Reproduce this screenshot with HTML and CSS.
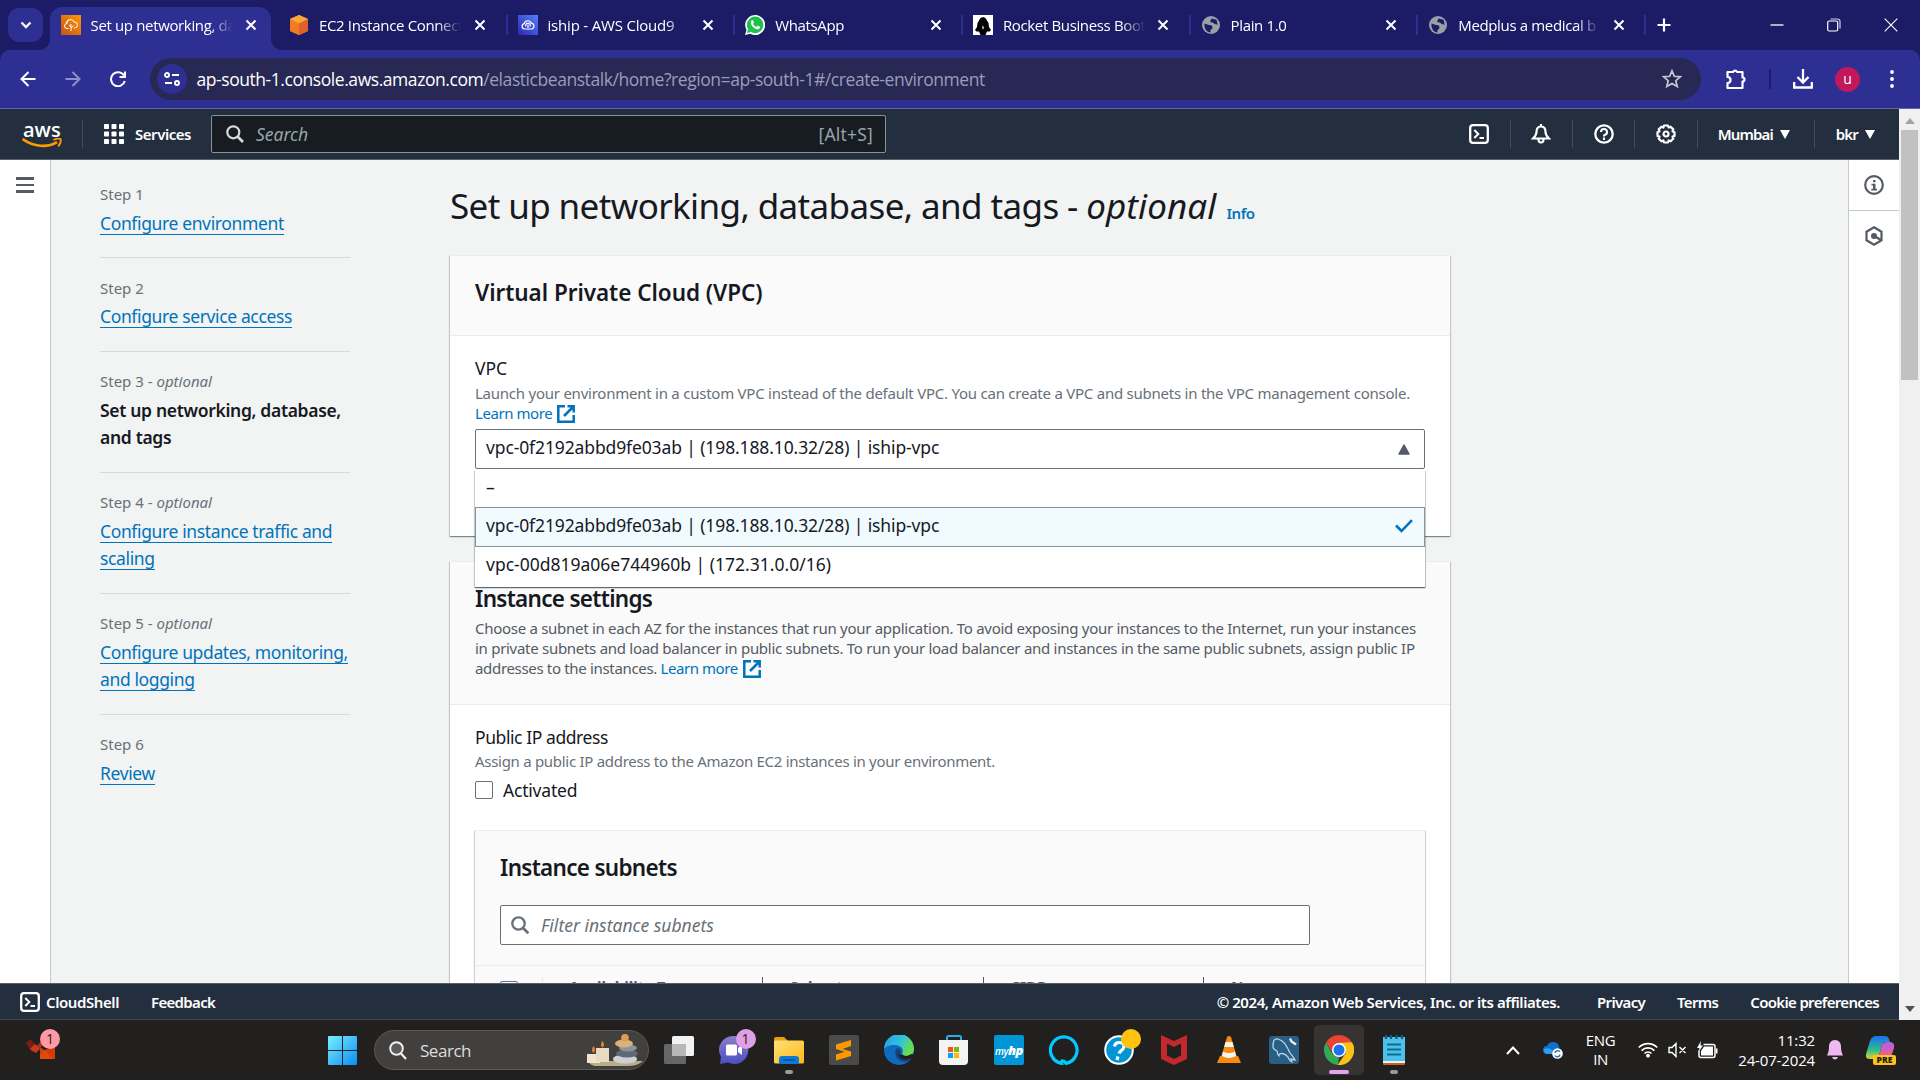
FILE: index.html
```html
<!DOCTYPE html>
<html lang="en">
<head>
<meta charset="utf-8">
<title>Set up networking, database, and tags</title>
<link rel="stylesheet" href="styles.css">
</head>
<body>
<svg class="defs" aria-hidden="true">
  <defs>
    <symbol id="close" viewBox="0 0 12 12"><path d="M1.500 1.500l9 9M10.500 1.500l-9 9" stroke="#fff" stroke-width="2" fill="none"/></symbol>
    <symbol id="globe" viewBox="0 0 20 20"><circle cx="10" cy="10" r="9" fill="#9aa0a6"/><path d="M3.500 8.500l4.500 1.500 3 .5.5 3-2 1.500v2.500c-3.500-.5-6.500-3.500-6-9zM10.500 3.500l5 1.200 1.200 5-3-.7-2-1.500-2.700-.5z" fill="#1c1b66"/></symbol>
    <symbol id="ext" viewBox="0 0 18 18"><path d="M8 1.300H1.300v15.400h15.400V10M10.500 1.300h6.200v6.200M16.500 1.500L7 11" stroke="#0073bb" stroke-width="2.500" fill="none"/></symbol>
    <symbol id="shell" viewBox="0 0 20 20"><rect x="1.200" y="1.200" width="17.600" height="17.600" rx="2.800" stroke="#fff" stroke-width="2.300" fill="none"/><path d="M5.300 6l4 4-4 4M10.500 14h4.500" stroke="#fff" stroke-width="2" fill="none"/></symbol>
    <symbol id="caret" viewBox="0 0 10 9"><path d="M0 0h10L5 9z" fill="#fff"/></symbol>
  </defs>
</svg>

<header class="tabstrip">
  <div class="tabsearch"><svg width="12" height="8" viewBox="0 0 12 8"><path d="M1.500 1.500L6 6l4.500-4.500" stroke="#fff" stroke-width="2.300" fill="none"/></svg></div>
  <div class="tab wide active">
    <svg class="fav" viewBox="0 0 20 20"><defs><linearGradient id="gO" x1="0" y1="1" x2="1" y2="0"><stop offset="0" stop-color="#c8511b"/><stop offset="1" stop-color="#f90"/></linearGradient></defs><rect width="20" height="20" fill="url(#gO)"/><path d="M7.500 13.500H6a2.500 2.500 0 010-5 3.600 3.600 0 017-1.500 3 3 0 01.8 6H12.500M10 16V9M10 12l-2-2M10 13l2.500-2.500M7.500 4.500L5 8" stroke="#fff" stroke-width="1" fill="none"/></svg>
    <span class="tabtitle">Set up networking, da</span><svg class="x"><use href="#close"/></svg>
  </div>
  <div class="tab wide">
    <svg class="fav" viewBox="0 0 20 20"><path d="M10 0l9 4v12l-9 4-9-4V4z" fill="#f58536"/><path d="M1 4l9 4.500V20l-9-4z" fill="#f27a22"/><path d="M10 0l9 4-9 4.500L1 4z" fill="#fba63c"/><path d="M10 8.500L19 4v12l-9 4z" fill="#e0602a"/></svg>
    <span class="tabtitle">EC2 Instance Connect</span><svg class="x"><use href="#close"/></svg>
  </div>
  <div class="tab">
    <svg class="fav" viewBox="0 0 20 20"><defs><linearGradient id="gB" x1="0" y1="1" x2="1" y2="0"><stop offset="0" stop-color="#2e27ad"/><stop offset="1" stop-color="#527fff"/></linearGradient></defs><rect width="20" height="20" fill="url(#gB)"/><path d="M6.500 14a2.700 2.700 0 01-.3-5.300 3.700 3.700 0 017.100-.5A3 3 0 0114 14zM8 11.500a2.300 2.300 0 114 0M10 9.500V13" stroke="#fff" stroke-width="1.200" fill="none"/></svg>
    <span class="tabtitle loose">iship - AWS Cloud9</span><svg class="x"><use href="#close"/></svg>
  </div>
  <div class="tab">
    <svg class="fav" viewBox="0 0 20 20"><path d="M0 20l1.500-5A10 10 0 1110 20a10 10 0 01-4.800-1.300z" fill="#fff"/><circle cx="10.100" cy="9.900" r="8.300" fill="#1fc04c"/><path d="M2 18l1-4 3 3z" fill="#1fc04c"/><path d="M6.500 5.500c1-1 1.500-.5 2.300 1.700.3.800-.6 1-.6 1.700.6 1.300 1.600 2.300 3 2.900.6 0 1-1.300 1.700-1 2 1 2.600 1 2 2-1 2.300-4 1.700-6.300-.3C6 10.200 5 7.500 6.500 5.500z" fill="#fff"/></svg>
    <span class="tabtitle">WhatsApp</span><svg class="x"><use href="#close"/></svg>
  </div>
  <div class="tab">
    <svg class="fav" viewBox="0 0 20 20"><rect width="20" height="20" fill="#fff"/><path d="M10 2l2.500 1 3 5 .5 4 2 3-1.500 1.500H14L12.500 20h-5L6 16.500H3.500L2 15l2-3 .5-4 3-5z" fill="#000"/><path d="M10 10l.8 3-.8 1.500-.8-1.500z" fill="#fff"/></svg>
    <span class="tabtitle">Rocket Business Boot</span><svg class="x"><use href="#close"/></svg>
  </div>
  <div class="tab"><svg class="fav"><use href="#globe"/></svg><span class="tabtitle">Plain 1.0</span><svg class="x"><use href="#close"/></svg></div>
  <div class="tab"><svg class="fav"><use href="#globe"/></svg><span class="tabtitle">Medplus a medical b</span><svg class="x"><use href="#close"/></svg></div>
  <svg class="plus" width="14" height="14" viewBox="0 0 14 14"><path d="M7 .5v13M.5 7h13" stroke="#fff" stroke-width="2.200"/></svg>
  <div class="winbtns">
    <svg width="14" height="14" viewBox="0 0 14 14"><path d="M.5 7h13" stroke="#fff" stroke-width="1.300"/></svg>
    <svg width="14" height="14" viewBox="0 0 14 14"><rect x=".7" y="3" width="10" height="10" rx="1.500" fill="#1c1b66" stroke="#fff" stroke-width="1.200"/><path d="M3.500 1h7a2.500 2.500 0 012.500 2.500v7" stroke="#d0d0e8" stroke-width="1.200" fill="none"/></svg>
    <svg width="14" height="14" viewBox="0 0 14 14"><path d="M.7.7l12.600 12.600M13.300.7L.7 13.300" stroke="#fff" stroke-width="1.100"/></svg>
  </div>
</header>

<div class="toolbar">
  <div class="navbtns">
    <svg width="16" height="16" viewBox="0 0 16 16"><path d="M15.500 8H2M8.500 1L1.500 8l7 7" stroke="#fff" stroke-width="2" fill="none"/></svg>
    <svg width="16" height="16" viewBox="0 0 16 16"><path d="M.5 8H14M7.500 1l7 7-7 7" stroke="#8f8fc9" stroke-width="2" fill="none"/></svg>
    <svg width="16" height="16" viewBox="0 0 16 16"><path d="M14 4.500A7 7 0 1014.800 10M15 .5V6H9.500" stroke="#fff" stroke-width="2" fill="none"/></svg>
  </div>
  <div class="omnibox">
    <span class="siteinfo"><svg width="16" height="14" viewBox="0 0 16 14"><g stroke="#fff" stroke-width="1.900" fill="none"><circle cx="3" cy="3" r="2"/><path d="M8 3h7M1 11h7"/><circle cx="13" cy="11" r="2"/></g></svg></span>
    <span class="url"><b>ap-south-1.console.aws.amazon.com</b>/elasticbeanstalk/home?region=ap-south-1#/create-environment</span>
    <svg class="star" width="20" height="20" viewBox="0 0 20 20"><path d="M10 1.800l2.300 5.500 6 .5-4.500 3.900 1.400 5.800-5.200-3.100-5.200 3.100 1.400-5.800L1.700 7.800l6-.5z" stroke="#c7c7d2" stroke-width="1.700" fill="none"/></svg>
  </div>
  <svg class="puzzle" width="21" height="22" viewBox="0 0 21 22"><path d="M1.500 4h5.700a2 2 0 013.800 0H16.500v5.500a2 2 0 010 4V20h-15v-5a2.700 2.700 0 000-6z" stroke="#fff" stroke-width="2.200" fill="none" stroke-linejoin="round"/></svg>
  <span class="tbsep"></span>
  <svg class="dl" width="20" height="20" viewBox="0 0 20 20"><path d="M10 0v13M4.500 8l5.500 5.500L15.500 8M1.200 13v5.500h17.600V13" stroke="#fff" stroke-width="2.300" fill="none"/></svg>
  <span class="avatar">u</span>
  <svg class="kebab" width="4" height="18" viewBox="0 0 4 18"><g fill="#fff"><circle cx="2" cy="2" r="1.900"/><circle cx="2" cy="9" r="1.900"/><circle cx="2" cy="16" r="1.900"/></g></svg>
</div>

<div class="viewport">
  <div class="page">
    <nav class="awsbar">
      <div class="awslogo"><span>aws</span><svg width="40" height="11" viewBox="0 0 40 11"><path d="M.5 1c11 8 25 9 34.500 3.200" stroke="#f90" stroke-width="2.700" fill="none"/><path d="M31.500 2c3-1.500 5.500-1.700 7-1 .6 2-.3 5-2.300 7.300" stroke="#f90" stroke-width="1.900" fill="none"/></svg></div>
      <i class="asep"></i>
      <svg class="gridicon" width="20" height="20" viewBox="0 0 20 20"><g fill="#fff"><rect width="5" height="5" rx=".8"/><rect x="7.500" width="5" height="5" rx=".8"/><rect x="15" width="5" height="5" rx=".8"/><rect y="7.500" width="5" height="5" rx=".8"/><rect x="7.500" y="7.500" width="5" height="5" rx=".8"/><rect x="15" y="7.500" width="5" height="5" rx=".8"/><rect y="15" width="5" height="5" rx=".8"/><rect x="7.500" y="15" width="5" height="5" rx=".8"/><rect x="15" y="15" width="5" height="5" rx=".8"/></g></svg>
      <span class="nav services">Services</span>
      <div class="awssearch"><svg width="18" height="18" viewBox="0 0 18 18"><circle cx="7.300" cy="7.300" r="6" stroke="#d5dbdb" stroke-width="2.200" fill="none"/><path d="M11.500 11.500l5.500 5.500" stroke="#d5dbdb" stroke-width="2.600"/></svg><em>Search</em><span>[Alt+S]</span></div>
      <div class="awsicons">
        <svg width="20" height="20"><use href="#shell"/></svg><i class="asep"></i>
        <svg width="20" height="20" viewBox="0 0 20 20"><path d="M10 2.500c-3.500 0-4.500 2.500-4.500 5.500 0 3-1.500 4.500-3.500 6.500h16c-2-2-3.500-3.500-3.500-6.500 0-3-1-5.500-4.500-5.500zM10 0v3M7.500 15.500a2.500 3 0 005 0" stroke="#fff" stroke-width="2.200" fill="none"/></svg><i class="asep"></i>
        <svg width="20" height="20" viewBox="0 0 20 20"><circle cx="10" cy="10" r="8.700" stroke="#fff" stroke-width="2.300" fill="none"/><path d="M7 8a3 3 0 113.500 3c-.5.200-.5.600-.5 1.500M10 13.500V16" stroke="#fff" stroke-width="2.100" fill="none"/></svg><i class="asep"></i>
        <svg width="20" height="20" viewBox="0 0 20 20"><path d="M8 1.500h4l.6 2 2-.8 2.700 2.700-.8 2 2 .6v4l-2 .6.8 2-2.700 2.700-2-.8-.6 2H8l-.6-2-2 .8-2.700-2.700.8-2-2-.6V8l2-.6-.8-2 2.700-2.700 2 .8z" stroke="#fff" stroke-width="2.200" fill="none" stroke-linejoin="round"/><circle cx="10" cy="10" r="2.500" stroke="#fff" stroke-width="2.200" fill="none"/></svg><i class="asep"></i>
      </div>
      <span class="nav region">Mumbai</span><svg class="car" width="10" height="9"><use href="#caret"/></svg>
      <i class="asep last"></i>
      <span class="nav user">bkr</span><svg class="car" width="10" height="9"><use href="#caret"/></svg>
    </nav>

    <div class="body">
      <aside class="rail"><i></i><i></i><i></i></aside>
      <div class="content">
        <ol class="steps">
          <li><small>Step 1</small><a>Configure environment</a></li>
          <li><small>Step 2</small><a>Configure service access</a></li>
          <li><small>Step 3 - <em>optional</em></small><strong>Set up networking, database,</strong><br><strong>and tags</strong></li>
          <li><small>Step 4 - <em>optional</em></small><a>Configure instance traffic and</a><br><a>scaling</a></li>
          <li><small>Step 5 - <em>optional</em></small><a>Configure updates, monitoring,</a><br><a>and logging</a></li>
          <li><small>Step 6</small><a>Review</a></li>
        </ol>
        <main class="main">
          <div class="headline"><h1>Set up networking, database, and tags - <em>optional</em></h1><b>Info</b></div>

          <section class="card vpc">
            <div class="cardhead"><h2>Virtual Private Cloud (VPC)</h2></div>
            <div class="cardbody">
              <div class="label">VPC</div>
              <div class="hint">Launch your environment in a custom VPC instead of the default VPC. You can create a VPC and subnets in the VPC management console.<br><span class="link">Learn more</span><svg class="ext" width="18" height="18"><use href="#ext"/></svg></div>
              <div class="selectwrap">
                <div class="select"><span class="val">vpc-0f2192abbd9fe03ab | (198.188.10.32/28) | iship-vpc</span><svg width="12" height="11" viewBox="0 0 12 11"><path d="M6 1l5 9H1z" fill="#545b64" stroke="#545b64" stroke-width="1.500" stroke-linejoin="round"/></svg></div>
                <div class="menu">
                  <div class="opt first"><span>–</span></div>
                  <div class="opt sel"><span class="val">vpc-0f2192abbd9fe03ab | (198.188.10.32/28) | iship-vpc</span><svg width="18" height="14" viewBox="0 0 18 14"><path d="M1 6.500l5.500 5.500L17 1.200" stroke="#0073bb" stroke-width="2.500" fill="none"/></svg></div>
                  <div class="opt"><span>vpc-00d819a06e744960b | (172.31.0.0/16)</span></div>
                </div>
              </div>
            </div>
          </section>

          <section class="card inst">
            <div class="cardhead">
              <h2>Instance settings</h2>
              <p class="hint dark">Choose a subnet in each AZ for the instances that run your application. To avoid exposing your instances to the Internet, run your instances<br>in private subnets and load balancer in public subnets. To run your load balancer and instances in the same public subnets, assign public IP<br><span class="third">addresses to the instances. <span class="link">Learn more</span></span><svg class="ext" width="18" height="18"><use href="#ext"/></svg></p>
            </div>
            <div class="cardbody">
              <div class="label">Public IP address</div>
              <div class="hint tight">Assign a public IP address to the Amazon EC2 instances in your environment.</div>
              <div class="check"><i class="box"></i><span>Activated</span></div>
              <div class="subcard">
                <h2>Instance subnets</h2>
                <div class="filter"><svg width="18" height="18" viewBox="0 0 18 18"><circle cx="7.500" cy="7.500" r="6.200" stroke="#687078" stroke-width="2.300" fill="none"/><path d="M12 12l5.300 5.300" stroke="#687078" stroke-width="2.700"/></svg><em>Filter instance subnets</em></div>
                <div class="thead"><span class="c0"><i class="box"></i></span><span class="c1">Availability Zone</span><span class="c2">Subnet</span><span class="c2">CIDR</span><span class="c2">Name</span></div>
              </div>
            </div>
          </section>
        </main>
      </div>
      <aside class="tools">
        <div><svg width="20" height="20" viewBox="0 0 20 20"><circle cx="10" cy="10" r="8.800" stroke="#545b64" stroke-width="2.200" fill="none"/><path d="M9 5h2.500v2.200H9zM7.500 8.700h4v5H13v1.800H7.300v-1.800H9v-3.200H7.500z" fill="#545b64"/></svg></div>
        <div><svg width="20" height="20" viewBox="0 0 20 20"><path d="M10 1.300l7.500 4.400v8.600L10 18.700l-7.500-4.400V5.700z" stroke="#545b64" stroke-width="2.200" fill="none"/><circle cx="10" cy="10" r="3" fill="#545b64"/><path d="M11 10.500l6 3.500" stroke="#545b64" stroke-width="2.400"/></svg></div>
      </aside>
    </div>

    <footer class="awsfoot">
      <svg width="20" height="20"><use href="#shell"/></svg><span class="f1">CloudShell</span><span class="f2">Feedback</span>
      <span class="f3">© 2024, Amazon Web Services, Inc. or its affiliates.</span><span class="f4">Privacy</span><span class="f5">Terms</span><span class="f6">Cookie preferences</span>
    </footer>
  </div>
  <div class="scroll"><svg width="10" height="6" viewBox="0 0 10 6"><path d="M0 6l5-6 5 6z" fill="#a3a3a3"/></svg><i></i><svg width="10" height="6" viewBox="0 0 10 6"><path d="M0 0l5 6 5-6z" fill="#505050"/></svg></div>
</div>

<footer class="taskbar">
  <div class="widget"><svg width="32" height="30" viewBox="0 0 32 30"><path d="M0 5l4-4 6 6-5 6z" fill="#7b1d16"/><path d="M5 13L17 2l2 3-9 9z" fill="#a8321a"/><path d="M4 11l5-5 5 5-4 4z" fill="#c9391a"/><path d="M14 17V9l4 3 11-3v12H14z" fill="#d83b01"/><path d="M14 17l5-5 8 9H14z" fill="#e04a0b"/></svg><b>1</b></div>
  <svg class="start" width="29" height="29" viewBox="0 0 29 29"><defs><linearGradient id="gW" x1="0" y1="0" x2="1" y2="1"><stop offset="0" stop-color="#7af0ff"/><stop offset="1" stop-color="#0a8bf5"/></linearGradient></defs><path d="M0 1q0-1 1-1h13v14H0zM15 0h13q1 0 1 1v13H15zM0 15h14v14H1q-1 0-1-1zM15 15h14v13q0 1-1 1H15z" fill="url(#gW)"/></svg>
  <div class="tsearch"><svg width="18" height="19" viewBox="0 0 18 19"><circle cx="7.500" cy="7.500" r="6.300" stroke="#f2f2f2" stroke-width="1.900" fill="#5a5a5c"/><path d="M12 12.500l5 5.500" stroke="#f2f2f2" stroke-width="2.200"/></svg><span>Search</span>
    <svg class="candles" width="60" height="32" viewBox="0 0 60 32"><path d="M4 27h54q-5 5-16 5H10q-6-1-6-5z" fill="#b8ae88"/><rect x="2" y="20" width="13" height="9" fill="#f1e6cd"/><rect x="11" y="14" width="13" height="14" fill="#e8dcc0"/><path d="M8.500 12q3 4 0 7-3-3 0-7zM17.500 7q3 4 0 6.500-3-2.500 0-6.500z" fill="#f58220"/><ellipse cx="40" cy="25" rx="12" ry="4.500" fill="#cfd0d6"/><ellipse cx="42" cy="19.500" rx="11" ry="4" fill="#5d6a73"/><ellipse cx="43" cy="14" rx="9" ry="3.500" fill="#8b9499"/><ellipse cx="39" cy="9.500" rx="9" ry="4" fill="#d9b27a"/><circle cx="40" cy="3.800" r="3.800" fill="#dd9d52"/></svg>
  </div>
  <div class="apps">
    <div class="app"><svg viewBox="0 0 30 30"><rect y="9" width="22" height="20" rx="1.500" fill="#666"/><rect x="8" y="1" width="22" height="20" rx="1.500" fill="#f2f2f2"/><path d="M8 9h14v12H8z" fill="#b8b8b8"/></svg></div>
    <div class="app"><svg viewBox="0 0 30 30"><defs><linearGradient id="gC" x1="0" y1="0" x2="0" y2="1"><stop offset="0" stop-color="#8b7fc8"/><stop offset="1" stop-color="#4b4fc4"/></linearGradient></defs><path d="M15 1a14 14 0 11-6 26.500L1 29l1-7A14 14 0 0115 1z" fill="url(#gC)"/><rect x="7" y="9.500" width="11" height="11" rx="1.500" fill="#fff"/><path d="M19 13l4-3v10l-4-3z" fill="#fff"/></svg><b class="badge pink">1</b></div>
    <div class="app"><svg viewBox="0 0 30 30"><defs><linearGradient id="gF" x1="0" y1="0" x2="1" y2="1"><stop offset="0" stop-color="#ffe07a"/><stop offset="1" stop-color="#fcb916"/></linearGradient></defs><path d="M0 4q0-2 2-2h8l4 4v6H0z" fill="#e3a008"/><rect y="5.500" width="30" height="23" rx="1.500" fill="url(#gF)"/><path d="M5 29v-5q0-3 3-3h14q3 0 3 3v5z" fill="#0f78d4"/><path d="M9 25h12" stroke="#0a4f96" stroke-width="1.500"/></svg><i class="dot"></i></div>
    <div class="app"><svg viewBox="0 0 30 30"><rect width="30" height="30" rx="2" fill="#4a4a4a"/><path d="M7 9.500L22 5v6l-8.500 3L22 16.500V21L7 25.500v-6l8.500-2.700L7 14z" fill="#ff9800"/></svg></div>
    <div class="app"><svg viewBox="0 0 30 30"><defs><linearGradient id="gE" x1="0" y1="0" x2="1" y2=".4"><stop offset="0" stop-color="#1b9de2"/><stop offset=".6" stop-color="#35c1e0"/><stop offset="1" stop-color="#66e04a"/></linearGradient></defs><circle cx="15" cy="15" r="15" fill="#0f6cbd"/><path d="M0 14A15 15 0 0130 14c0 5-4 7-8 7-3 0-4-1.500-3.500-3 1-2 .5-6-4.500-7.500C8 9 2 11 0 14z" fill="url(#gE)"/><path d="M12 14c-3 7 3 13 10 13 3-.5 5-3 6-4.500-5 2-13 .5-11-5.500 0-3-3-5-5-3z" fill="#14407e"/><path d="M14 20c2 4 8 5.500 13.500 3l2.500 2v-5l-3-1c-4 3-7 2-9 .5z" fill="#221f1e"/></svg></div>
    <div class="app"><svg viewBox="0 0 30 30"><path d="M8 7V2.500Q8 1 9.500 1h11Q22 1 22 2.500V7" stroke="#28aee8" stroke-width="2" fill="none"/><path d="M0 5h29v21q0 4-4 4H4q-4 0-4-4z" fill="#f3f3f3"/><path fill="#f25022" d="M9 12h5v5H9z"/><path fill="#7fba00" d="M15 12h5v5h-5z"/><path fill="#00a4ef" d="M9 18h5v5H9z"/><path fill="#ffb900" d="M15 18h5v5h-5z"/></svg></div>
    <div class="app"><span class="myhp">my<b>hp</b></span></div>
    <div class="app"><svg viewBox="0 0 30 30"><path d="M12.500 28.300A13.300 13.300 0 1117 28.300C15 25 11.500 25 12.500 28.300z" stroke="#00caff" stroke-width="3.200" fill="none" /></svg></div>
    <div class="app"><svg viewBox="0 0 30 30"><circle cx="15" cy="15" r="13.800" fill="#0096d6" stroke="#fff" stroke-width="2"/><path d="M10.500 11.500Q11 7.500 15.500 7.500t4.500 4c0 3.500-4 3.500-5 7M14 21.500l-1 3.500" stroke="#fff" stroke-width="3.200" fill="none"/></svg><b class="badge yellow"></b></div>
    <div class="app"><svg viewBox="0 0 30 30"><path d="M2 0l13 6 13-6v24l-13 6-13-6zm6 8.500v12L15 24l7-3.500v-12L15 12z" fill="#c2292e" fill-rule="evenodd"/></svg></div>
    <div class="app"><svg viewBox="0 0 30 30"><path d="M13 2q2-2 4 0l7 24H6z" fill="#f98b0e"/><path d="M11.500 7h7l1.300 5h-9.600zM9 16.500q6 3 12 0l1.300 5.500q-7.300 4-14.600 0z" fill="#f3f3f3"/><path d="M6 21h2q7 4 14 0h2l3 7H3z" fill="#f98b0e"/></svg></div>
    <div class="app"><svg viewBox="0 0 30 30"><rect y="1" width="30" height="28" rx="3" fill="#2a5f85"/><path d="M4 12C4 6 5 3 9 4c7 2 9 8 12 14 2 3 4 4 5 7l-4-1 1 3c-3-1-3-3-4-5C16 18 10 17 10 21c-2-1-1-3-2-5-2-1-4-2-4-4z" stroke="#b9d3e4" stroke-width="1.300" fill="none"/><path d="M21 3.500l1.500 3 4.500 3" stroke="#eee" stroke-width="2.400" fill="none"/></svg></div>
    <div class="app on"><svg viewBox="0 0 30 30"><path d="M15 0a15 15 0 0113 7.500H15L9 18.500 2 7.500A15 15 0 0115 0z" fill="#ea4335"/><path d="M2 7.500L8.500 19 15 22.500 13.800 30A15 15 0 012 7.500z" fill="#34a853"/><path d="M28 7.500A15 15 0 0113.500 30L21.500 18.500V7.500z" fill="#fbc116"/><path d="M15 7.500h13q2 4 2 7.500l-9 1z" fill="#fbc116"/><circle cx="15" cy="15" r="7" fill="#fff"/><circle cx="15" cy="15" r="5.500" fill="#1a73e8"/></svg><i class="dot long"></i></div>
    <div class="app"><svg viewBox="0 0 30 30"><path d="M4 2h22v26q0 2-2 2H6q-2 0-2-2z" fill="#4cc2ea"/><path d="M4 27h22v1q0 2-2 2H6q-2 0-2-2z" fill="#c9621d"/><path d="M4 26h22v2H4z" fill="#eee"/><path d="M7 0v4M12 0v4M17.500 0v4M23 0v4" stroke="#0b5c80" stroke-width="2.200"/><path d="M8 9.500h14M8 14.500h14M8 19.500h14" stroke="#0d6a92" stroke-width="2"/></svg><i class="dot"></i></div>
  </div>
  <div class="tray">
    <svg class="up" width="14" height="9" viewBox="0 0 14 9"><path d="M1 8l6-6.500L13 8" stroke="#fff" stroke-width="2" fill="none"/></svg>
    <svg class="od" width="20" height="18" viewBox="0 0 20 18"><path d="M4 13a4 4 0 010-8 6.500 6.500 0 0112 0q1 3 0 8z" fill="#0f6fce"/><path d="M1 8q6-3 12 5H4Q0 12 1 8z" fill="#2aa0f2"/><circle cx="14.500" cy="12.500" r="5.300" fill="#fff"/><path d="M12 12a2.700 2.700 0 015-1M17 13.500a2.700 2.700 0 01-5 1" stroke="#0f6fce" stroke-width="1.400" fill="none"/></svg>
    <span class="lang">ENG<br>IN</span>
    <svg class="wifi" width="20" height="16" viewBox="0 0 20 16"><g stroke="#fff" stroke-width="1.700" fill="none"><path d="M.8 5.500a13 13 0 0118.400 0M3.600 8.600a9 9 0 0112.800 0M6.500 11.500a5 5 0 017 0"/></g><circle cx="10" cy="13.700" r="1.900" fill="#fff"/></svg>
    <svg class="mute" width="19" height="16" viewBox="0 0 19 16"><path d="M1 5.500h3L8 1.500v13L4 10.500H1zM11.500 5l6 6M17.500 5l-6 6" stroke="#fff" stroke-width="1.400" fill="none"/></svg>
    <svg class="bat" width="21" height="18" viewBox="0 0 21 18"><path d="M6.500 3.500H16q2 0 2 2v9q0 2-2 2H4q-2 0-2-2V9.500" stroke="#fff" stroke-width="1.500" fill="none"/><path d="M4 14.500V10L7 5.500h9v9zM19 7.500h1.500v5H19z" fill="#fff"/><path d="M4 0L0 7h2.500L1.500 11 6 4.500H3.500z" fill="#fff"/></svg>
    <span class="clock">11:32<br>24-07-2024</span>
    <svg class="bell" width="16" height="20" viewBox="0 0 16 20"><path d="M8 0c4 0 6 3 6 6.500 0 4 .5 5.500 2 9H0c1.500-3.500 2-5 2-9C2 3 4 0 8 0zM5 17h6q-1 2.500-3 2.500T5 17z" fill="#efb8f0"/></svg>
    <svg class="copilot" width="30" height="30" viewBox="0 0 30 30"><defs><linearGradient id="gP" x1="0" y1="0" x2="0" y2="1"><stop offset="0" stop-color="#1a6ff0"/><stop offset=".6" stop-color="#2dbd8c"/><stop offset="1" stop-color="#e3d02f"/></linearGradient><linearGradient id="gQ" x1="0" y1="0" x2="0" y2="1"><stop offset="0" stop-color="#b45cf0"/><stop offset="1" stop-color="#f4627d"/></linearGradient></defs><path d="M10 1h9q3 0 4 3l1 3h-5q-2 0-3 3l-3 10q-1 4-5 4H4q-5 0-4-5L4 6q2-5 6-5z" fill="url(#gP)"/><path d="M21 7h3q5 0 4 6l-3 9H11q2-1 3-5l2-7q1-3 5-3z" fill="url(#gQ)"/><rect x="7" y="20" width="23" height="10" rx="2" fill="#fcc417"/><text x="18.500" y="28.300" class="pre">PRE</text></svg>
  </div>
</footer>
</body>
</html>
```
FILE: styles.css
```css
* { box-sizing: border-box; }
body { margin: 0; width: 1920px; height: 1080px; overflow: hidden; display: flex; flex-direction: column; font-family: "Noto Sans", "Open Sans", sans-serif; color: #16191f; background: #1c1b66; }
svg { display: block; flex: none; }
.defs { position: absolute; width: 0; height: 0; }
i { flex: none; }

/* browser tabs */
.tabstrip { height: 50px; flex: none; display: flex; align-items: stretch; background: #1c1b66; color: #fff; padding-left: 8px; font: 15px "Open Sans", sans-serif; }
.tabsearch { width: 35px; height: 34px; margin: 8px 6.5px 0 0; border-radius: 11px; background: #2e2f92; display: flex; align-items: center; justify-content: center; }
.tab { width: 227.7px; flex: none; display: flex; align-items: center; position: relative; padding-left: 11px; }
.tab.wide { width: 228.5px; }
.tab::after { content: ""; position: absolute; right: -1px; top: 15px; width: 2px; height: 20px; background: #2e2f92; }
.fav { width: 20px; height: 20px; margin-right: 10px; position: relative; }
.tabtitle { width: 142px; height: 24px; line-height: 24px; overflow: hidden; white-space: nowrap; position: relative; margin-right: 12.5px; letter-spacing: -0.35px; -webkit-mask-image: linear-gradient(90deg, #000 118px, transparent 142px); mask-image: linear-gradient(90deg, #000 118px, transparent 142px); }
.tabtitle.loose { letter-spacing: -.19px; }
.x { width: 12px; height: 12px; position: relative; }
.tab.active::before { content: ""; position: absolute; left: .5px; top: 7px; width: 221px; height: 43px; border-radius: 12px 12px 0 0; background: #2e2f92; }
.tab.active::after { left: -11.5px; right: auto; top: 38px; width: 245px; height: 12px; background: radial-gradient(circle at 0 0, transparent 12px, #2e2f92 12.5px) left / 12px 12px no-repeat, radial-gradient(circle at 100% 0, transparent 12px, #2e2f92 12.5px) right / 12px 12px no-repeat; }
.plus { align-self: center; margin-left: 12px; }
.winbtns { display: flex; align-items: center; gap: 43px; margin: 0 22px 0 auto; }

/* address bar */
.toolbar { height: 59px; flex: none; display: flex; align-items: center; background: #2e2f92; border-bottom: 1px solid #6264b0; border-radius: 10px 10px 0 0; padding: 0 26px 0 20px; }
.navbtns { display: flex; gap: 28.8px; width: 130px; }
.omnibox { width: 1551px; height: 42px; border-radius: 21px; background: #272854; display: flex; align-items: center; padding: 0 19px 0 7px; }
.siteinfo { width: 30px; height: 30px; border-radius: 50%; background: #2e2f92; display: flex; align-items: center; justify-content: center; }
.url { margin-left: 9.5px; font: 17.5px "Open Sans", sans-serif; letter-spacing: -.44px; color: #9c9cb8; white-space: nowrap; }
.url b { font-weight: 400; color: #fff; }
.star { margin-left: auto; }
.puzzle { margin-left: 25px; }
.tbsep { width: 2px; height: 20px; background: #1c1b66; margin-left: 22px; }
.dl { margin-left: 22px; }
.avatar { width: 25px; height: 25px; margin-left: 22px; border-radius: 50%; background: #c2185b; color: #fff; font: 14px/23px "Open Sans", sans-serif; text-align: center; }
.kebab { margin-left: auto; }

.viewport { height: 911px; flex: none; display: flex; }
.page { width: 1899px; display: flex; flex-direction: column; }

/* console navigation */
.awsbar { height: 51px; flex: none; display: flex; align-items: center; background: #232f3e; border-bottom: 1px solid #55606b; color: #fff; padding-left: 22px; }
.awslogo { width: 60px; height: 27px; display: flex; flex-direction: column; }
.awslogo span { font: 600 20px/17px "Open Sans", sans-serif; padding-left: 1px; height: 18px; }
.asep { width: 1px; height: 28px; background: #414d5c; }
.gridicon { margin-left: 21px; }
.nav { font: 600 15px/20px "Noto Sans", sans-serif; white-space: nowrap; }
.services { margin-left: 11px; width: 76px; letter-spacing: -.46px; }
.region { letter-spacing: -.89px; width: 55px; }
.user { letter-spacing: -.85px; width: 22px; }
.awssearch { width: 675px; height: 38px; border: 1px solid #879596; border-radius: 2px; background: #171b22; display: flex; align-items: center; padding: 0 12px 1px 14px; color: #95a5a6; font-size: 17.5px; }
.awssearch em { margin-left: 12px; }
.awssearch span { margin-left: auto; letter-spacing: .2px; }
.awsicons { display: flex; align-items: center; gap: 20.7px; margin: 0 20px 0 583px; }
.car { margin-left: 7px; }
.last { margin: 0 21px 0 24px; }

/* console body */
.body { height: 823px; flex: none; display: flex; background: #f2f3f3; overflow: hidden; }
.rail { width: 51px; background: #fff; border-right: 1px solid #c5cbcb; padding: 17px 0 0 16px; display: flex; flex-direction: column; gap: 4px; }
.rail i { width: 18px; height: 2.5px; background: #545b64; }
.content { flex: 1; display: flex; }
.steps { list-style: none; margin: 0 0 0 49px; padding: 4.8px 0 0; width: 250px; font-size: 17.5px; line-height: 27.5px; white-space: nowrap; letter-spacing: -.37px; }
.steps li { padding: 16.5px 0 20.2px; border-bottom: 1px solid #d5dbdb; }
.steps li:last-child { border: 0; }
.steps small { display: block; font-size: 15px; color: #687078; letter-spacing: 0; margin-bottom: .8px; }
.steps a { color: #0073bb; border-bottom: 1px solid #0073bb; display: inline-block; line-height: 21px; }
.steps strong { font-weight: 600; letter-spacing: -.32px; }
.main { width: 1000px; margin-left: 100px; }
.headline { height: 95px; display: flex; align-items: baseline; padding-top: 22px; }
h1 { margin: 0; font-size: 35px; line-height: 48px; font-weight: 400; white-space: nowrap; letter-spacing: -.62px; }
h1 em { letter-spacing: .1px; }
.headline b { font-size: 15px; color: #0073bb; margin-left: 10px; font-weight: 600; letter-spacing: -.45px; }
h2 { margin: 0; font-size: 22.5px; line-height: 28px; font-weight: 600; white-space: nowrap; letter-spacing: -.7px; }
.vpc h2 { letter-spacing: -.04px; }
.card { background: #fff; border-top: 1px solid #eaeded; box-shadow: 0 1px 1px 0 rgba(0,28,36,.3), 1px 1px 1px 0 rgba(0,28,36,.15), -1px 1px 1px 0 rgba(0,28,36,.15); }
.vpc { height: 281px; }
.inst { margin-top: 25px; height: 700px; }
.cardhead { background: #fafafa; border-bottom: 1px solid #eaeded; padding: 23.4px 25px 0; }
.vpc .cardhead { height: 80px; }
.inst .cardhead { height: 143px; }
.cardbody { padding: 19px 25px 0; }
.label { font-size: 17.5px; line-height: 26.5px; letter-spacing: -.42px; }
.vpc .label { letter-spacing: 0; line-height: 27.5px; }
.hint { font-size: 15px; line-height: 20px; color: #687078; margin: 0; white-space: nowrap; letter-spacing: -.24px; }
.tight { letter-spacing: -.29px; }
.dark { color: #545b64; margin-top: 4.6px; letter-spacing: -.285px; }
.third { letter-spacing: -.33px; }
.link { color: #0073bb; letter-spacing: -.44px; }
.ext { display: inline-block; vertical-align: -4px; margin-left: 5px; }
.selectwrap { position: relative; margin-top: 6.5px; font-size: 17.5px; white-space: nowrap; }
.val { letter-spacing: -.12px; }
.select { height: 40px; border: 1px solid #687078; border-radius: 2px; display: flex; align-items: center; justify-content: space-between; padding: 0 14px 0 10px; line-height: 35px; }
.select .val { height: 38px; }
.menu { position: absolute; left: 0; top: 41px; width: 950px; height: 117px; background: #fff; z-index: 2; box-shadow: 0 1px 1px 0 rgba(0,28,36,.5), 1px 1px 1px 0 rgba(0,28,36,.15), -1px 1px 1px 0 rgba(0,28,36,.15); }
.opt { height: 36px; display: flex; align-items: center; justify-content: space-between; padding: 0 11px 3px; }
.opt.sel { height: 40px; border: 1px solid #879596; background: #f1faff; padding: 0 11px 2px 10px; }
.opt.sel .val { margin-top: -2px; }
.opt.first { height: 37px; }
.check { display: flex; align-items: center; height: 28px; margin-top: 5px; gap: 10px; font-size: 17.5px; letter-spacing: -.2px; }
.box { width: 18px; height: 18px; border: 1px solid #687078; border-radius: 2px; background: #fff; display: block; }
.subcard { margin-top: 26.5px; height: 300px; background: #fafafa; border-top: 1px solid #eaeded; box-shadow: 0 1px 1px 0 rgba(0,28,36,.3), 1px 1px 1px 0 rgba(0,28,36,.15), -1px 1px 1px 0 rgba(0,28,36,.15); padding-top: 23px; }
.subcard h2 { margin-left: 25px; }
.filter { margin: 23px 0 20px 25px; width: 810px; height: 40px; border: 1px solid #687078; border-radius: 2px; background: #fff; display: flex; align-items: center; padding: 0 0 1px 10px; gap: 12px; color: #687078; font-size: 17.5px; }
.thead { border-top: 1px solid #eaeded; display: flex; padding: 11px 0 0 25px; font-size: 15px; font-weight: 700; line-height: 19px; color: #545b64; }
.c0 { width: 43px; border-right: 1px solid #eaeded; padding-top: 4px; height: 30px; }
.c1 { width: 220px; padding-left: 26px; border-right: 1px solid #545b64; }
.c2 { width: 220.5px; padding-left: 27px; border-right: 1px solid #545b64; }
.c2:last-child { border: 0; }
.tools { width: 51px; background: #fff; border-left: 1px solid #c5cbcb; }
.tools div { height: 50px; display: flex; align-items: center; justify-content: center; }
.tools div:first-child { height: 51px; border-bottom: 1px solid #c5cbcb; }
.awsfoot { height: 37px; flex: none; background: #232f3e; border-top: 1px solid #55606b; border-bottom: 1px solid #46484b; display: flex; align-items: center; color: #fff; font-size: 15px; font-weight: 600; padding: 0 20px; white-space: nowrap; letter-spacing: -.67px; }
.f1 { margin-left: 6px; width: 105px; letter-spacing: -.41px; }
.f3 { margin-left: auto; margin-right: 5px; letter-spacing: -.43px; }
.f4, .f5, .f6 { margin-left: 32px; }

.scroll { width: 21px; background: #f0f0f0; display: flex; flex-direction: column; align-items: center; padding: 9px 0 8px; }
.scroll i { width: 17px; height: 250px; background: #c1c1c1; margin: 6px 0 auto; }

/* desktop taskbar */
.taskbar { height: 60px; flex: none; background: #22201f; display: flex; align-items: center; color: #fff; font: 15px "Open Sans", sans-serif; padding-left: 26px; }
.widget { width: 302px; height: 60px; position: relative; padding-top: 18px; }
.widget b { position: absolute; left: 14px; top: 9px; width: 20px; height: 20px; border-radius: 50%; background: #ff99a4; color: #222; font: 14px/20px "Open Sans", sans-serif; text-align: center; }
.tsearch { width: 275px; height: 40px; margin-left: 17px; border: 1px solid #5a5857; border-radius: 20px; background: #42403f; display: flex; align-items: center; padding-left: 14px; font-size: 17px; color: #ddd; overflow: hidden; letter-spacing: -.47px; }
.tsearch span { margin-left: 13px; }
.candles { margin: 0 3px 0 auto; }
.apps { display: flex; margin-left: 2.5px; align-items: center; }
.app { width: 55px; height: 50px; display: flex; align-items: center; justify-content: center; position: relative; }
.app svg { width: 30px; height: 30px; }
.on::before { content: ""; position: absolute; left: 2.5px; top: 0; width: 50px; height: 50px; border-radius: 5px; background: #363433; z-index: -1; }
.app.on { isolation: isolate; }
.dot { position: absolute; left: 23.5px; top: 45px; width: 8px; height: 4px; border-radius: 2px; background: #9a9998; }
.dot.long { left: 17.5px; width: 20px; background: #e2a4ec; }
.badge { position: absolute; left: 29px; top: 4px; width: 20px; height: 20px; border-radius: 50%; color: #222; font: 14px/20px "Open Sans", sans-serif; text-align: center; }
.pink { background: #dfa0e8; }
.yellow { background: #ffc20e; }
.myhp { width: 30px; height: 30px; border-radius: 2px; background: #0096d6; font: italic 600 10px/30px "Open Sans", sans-serif; text-align: center; letter-spacing: -.5px; }
.myhp b { font-size: 13px; }
.tray { display: flex; align-items: center; flex: 1; height: 60px; }
.up { margin-left: 84px; }
.od { margin-left: 23px; }
.lang { margin-left: 22px; width: 32px; text-align: center; line-height: 19px; letter-spacing: -.4px; }
.wifi { margin-left: 21px; }
.mute { margin-left: 10px; }
.bat { margin-left: 10px; }
.clock { width: 97.5px; text-align: right; line-height: 20px; letter-spacing: -.15px; }
.bell { margin-left: 11.5px; }
.copilot { margin-left: 23px; }
.pre { font: 800 8.5px "Open Sans", sans-serif; text-anchor: middle; fill: #222; }
```
